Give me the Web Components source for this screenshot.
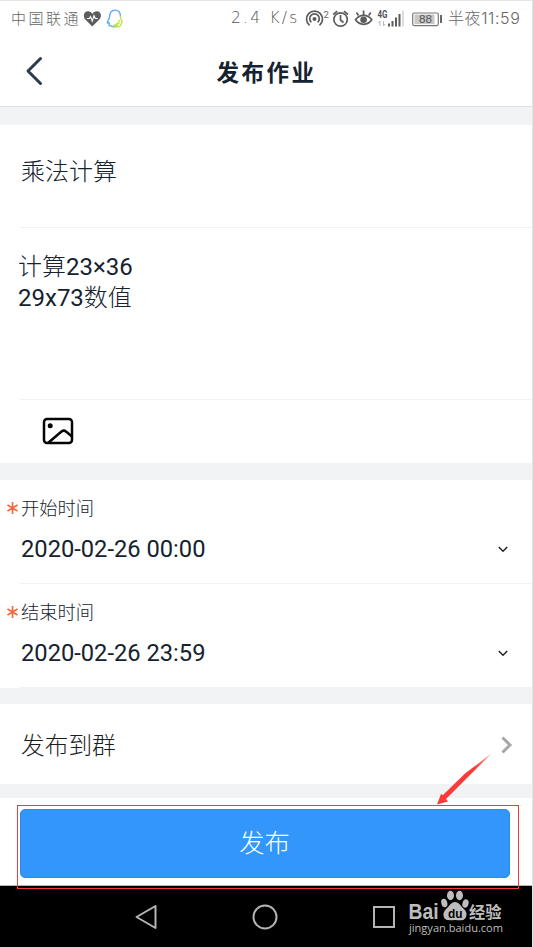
<!DOCTYPE html>
<html lang="zh-CN">
<head>
<meta charset="utf-8">
<title>发布作业</title>
<style>
    html, body { margin: 0; height: 100%; overflow: hidden; background: #fff; }
    body {
        font-family: Roboto, "Noto Sans CJK SC", sans-serif;
        color: #15222f;
    }
</style>
</head>
<body>
<homework-page></homework-page>

<script>
// small base: every element only differs in its markup
class BaseElement extends HTMLElement {
    constructor() {
        super();
        this._root = this.attachShadow({mode: 'open'});
    }

    connectedCallback() {
        this._root.innerHTML = this.render();
    }
}

class StatusBar extends BaseElement {
    render() {
        return `
            <style>
                :host {
                    display: flex;
                    justify-content: space-between;
                    height: 35px;
                    padding: 0 11px 0 11px;
                    font: 300 15px/35px Inter, "Noto Sans CJK SC", sans-serif;
                    color: #666;
                    white-space: nowrap;
                }
                div { display: flex; align-items: center; }
                svg { display: block; flex: none; }
                .carrier { width: 72px; letter-spacing: 2.5px; }
                .speed {
                    width: 74px;
                    font-family: "DejaVu Sans", sans-serif;
                    font-weight: 200;
                    font-size: 15.5px;
                    letter-spacing: 2.2px;
                    color: #555;
                }
                .clock { width: 73px; margin-left: 6px; letter-spacing: .6px; font-size: 16px; }
            </style>
            <div>
                <span class="carrier">中国联通</span>
                <svg width="19" height="20" viewBox="0 0 19 20">
                    <path d="M9.3 17.5 1.8 10C-.5 6 1.5 2.2 5 2.2c2 0 3.5 1 4.3 2.8 1-1.8 2.500-2.8 4.500-2.8 3.500 0 5.500 3.800 3 7.800z" fill="#5c5c5c"/>
                    <path d="M4 9.500h2.500l1-2 1.800 4.500 1.700-5.500 1.300 3h2.500" fill="none" stroke="#fff" stroke-width="1.100"/>
                </svg>
                <svg style="margin-left:3px" width="18" height="20" viewBox="0 0 18 20" fill="none" stroke-width="1.300">
                    <path d="M12.500 16.500c-1.500 1.700-5 1.700-6.700.300-2.100.400-2.300-.400-1.300-2l-.700-1.300c-1.500 1.500-2 .300-.700-2.300l1.400-2.700C4.500 4 6.300 1.200 10 1.200s5.400 2.800 5.500 6.500" stroke="#55aaf5"/>
                    <path d="M15.500 6.500v2.700c1.800 2.800 2 5 1 4.600-.600 2.600-2.200 4.200-3.800 3.900-2.500.400-3.900 0-4.200-1.200 3.500-.300 5.300-2.500 6-5.500M11 14.500c1.200.800 2.300.700 3.300-.500" stroke="#bfe342"/>
                </svg>
            </div>
            <div>
                <span class="speed">2.4 K/s</span>
                <svg width="137" height="22" viewBox="305 7 137 22">
                    <g fill="none" stroke="#5c5c5c" stroke-width="1.700">
                        <path d="M309.500 24.300a8 8 0 1 1 10 0M311.300 21.300a4.800 4.800 0 1 1 6.400 0"/>
                        <circle cx="340.600" cy="18.500" r="6.700"/>
                        <path d="M340.500 14v5l3 2.500M333.200 13.500l4-3.300M348 13.500l-4-3.300"/>
                        <path d="M355.500 18.800c4-5.800 12.300-5.800 16.300 0-4 6-12.300 6-16.300 0z"/>
                        <path d="M363.600 14v-4.500M358.500 14.500l-2-3M368.700 14.500l2-3"/>
                    </g>
                    <circle cx="314.500" cy="18" r="2" fill="#5c5c5c"/>
                    <circle cx="363.600" cy="18.800" r="3.300" fill="#5c5c5c"/>
                    <text x="323.500" y="16.500" font-family="Roboto" font-size="9.500" font-weight="400" fill="#666">2</text>
                    <text x="377.500" y="17" font-family="Roboto" font-size="10" font-weight="700" fill="#555" textLength="10" lengthAdjust="spacingAndGlyphs">4G</text>
                    <path d="M380 25v-5l-1.500 2M383.500 20v5l1.500-2" fill="none" stroke="#bbb"/>
                    <path d="M388 22.500h2v3h-2zM391.500 20h2v5.500h-2zM395 16.500h2v9h-2zM398.500 13h2v12.500h-2z" fill="#5c5c5c"/>
                    <path d="M402 9.500h2v16h-2z" fill="#ddd"/>
                    <rect x="412.700" y="12" width="25.600" height="12.600" rx="1.500" fill="none" stroke="#777" stroke-width="1.200"/>
                    <rect x="414.500" y="13.500" width="20" height="9.600" fill="#c8c8c8"/>
                    <path d="M440 14h2v8h-2z" fill="#666"/>
                    <text x="419" y="22.300" font-family="Liberation Sans" font-size="11.500" font-weight="400" fill="#555" textLength="13" lengthAdjust="spacingAndGlyphs">88</text>
                </svg>
                <span class="clock">半夜11:59</span>
            </div>
        `;
    }
}

class TitleBar extends BaseElement {
    render() {
        return `
            <style>
                :host {
                    display: grid;
                    grid-template-columns: 60px 1fr 60px;
                    align-items: center;
                    box-sizing: border-box;
                    height: 71px;
                    border-bottom: 1px solid #e0e1e3;
                }
                svg { margin-left: 24px; }
                h1 {
                    margin: 0 0 0 1px;
                    text-align: center;
                    font: 700 22.5px/30px "Noto Sans CJK SC", sans-serif;
                    letter-spacing: 2.5px;
                }
            </style>
            <svg width="20" height="30" viewBox="0 0 20 30" fill="none" stroke="#2e3b4a" stroke-width="3" stroke-linecap="round" stroke-linejoin="round"><path d="M16.500 2.500 4 15l12.500 12.500"/></svg>
            <h1><slot></slot></h1>
        `;
    }
}

class FormCard extends BaseElement {
    render() {
        return `
            <style>
                :host { display: block; flex: none; background: #fff; }
            </style>
            <slot></slot>
        `;
    }
}

class TextField extends BaseElement {
    render() {
        return `
            <style>
                :host {
                    display: block;
                    box-sizing: border-box;
                    font-size: 24px;
                    line-height: 31px;
                }
            </style>
            <slot></slot>
        `;
    }
}

class DateField extends BaseElement {
    render() {
        return `
            <style>
                :host {
                    display: block;
                    box-sizing: border-box;
                    height: 104px;
                    padding-top: 13px;
                }
                .label { display: flex; align-items: center; height: 28px; padding-left: 7px; font-size: 18.3px; font-weight: 300; }
                .label svg { margin: 2px 3px 0 0; }
                .value { display: flex; align-items: center; justify-content: space-between; height: 54px; margin: 1px 0 0 21px; padding-right: 24px; font-size: 23.7px; }
                hr { height: 1px; margin: 7px 0 0 20px; border: 0; background: #f1f2f3; }
            </style>
            <div class="label">
                <svg width="11" height="12" viewBox="0 0 11 12" stroke="#f4693c" stroke-width="1.700"><path d="M5.500 0v12M.500 3l10 6M.500 9l10-6"/></svg>
                <span>${this.getAttribute('label')}</span>
            </div>
            <div class="value">
                <span><slot></slot></span>
                <svg width="10" height="7" viewBox="0 0 10 7" fill="none" stroke="#222" stroke-width="1.500"><path d="m.800 1 4.200 4.200L9.200 1"/></svg>
            </div>
            <hr>
        `;
    }
}

class LinkRow extends BaseElement {
    render() {
        return `
            <style>
                :host {
                    display: flex;
                    align-items: center;
                    justify-content: space-between;
                    height: 80px;
                    padding: 0 19px 0 21px;
                    font-size: 23.7px;
                    font-weight: 300;
                    color: #1c1c22;
                }
                svg { margin-top: 2px; }
            </style>
            <span><slot></slot></span>
            <svg width="13" height="20" viewBox="0 0 13 20" fill="none" stroke="#a5a6a9" stroke-width="3"><path d="m2.500 2.500 7.500 7.500-7.500 7.500"/></svg>
        `;
    }
}

class PublishButton extends BaseElement {
    render() {
        return `
            <style>
                :host { display: block; flex: none; box-sizing: border-box; height: 88px; padding: 11px 22px 0 20px; border-bottom: 1px solid #b5b5b5; background: #fff; }
                button {
                    display: block;
                    width: 100%;
                    height: 69px;
                    padding: 0 1px 5px 0;
                    border: 1px solid #2f8ae6;
                    border-radius: 5px;
                    background: #3396fb;
                    color: #fff;
                    font: 300 25.3px "Noto Sans CJK SC", sans-serif;
                }
            </style>
            <button><slot></slot></button>
        `;
    }
}

class SystemNav extends BaseElement {
    render() {
        return `
            <style>
                :host { display: flex; flex: none; box-sizing: border-box; align-items: center; height: 61px; background: #000; }
                svg { flex: none; }
                .back { margin-left: 134px; }
                .home { margin-left: 93px; }
                .recent { margin-left: 93.5px; }
                .mark { margin-left: 11.5px; overflow: visible; }
            </style>
            <svg class="back" width="25" height="28" viewBox="0 0 25 28" fill="none" stroke="#b4b4b4" stroke-width="2" stroke-linejoin="round"><path d="M21.500 3v22L2.500 14z"/></svg>
            <svg class="home" width="26" height="26" viewBox="0 0 26 26" fill="none" stroke="#b4b4b4" stroke-width="2"><circle cx="13" cy="13" r="11.500"/></svg>
            <svg class="recent" width="24" height="24" viewBox="0 0 24 24" fill="none" stroke="#b4b4b4" stroke-width="2"><rect x="2" y="2" width="20" height="20"/></svg>
            <svg class="mark" width="100" height="52" viewBox="407 890.500 100 52" fill="#bdbdbd">
                <text x="408.500" y="918.500" font-family="Liberation Sans" font-weight="700" font-size="21.500" textLength="30" lengthAdjust="spacingAndGlyphs">Bai</text>
                <ellipse cx="444.300" cy="902.500" rx="3" ry="4.300" transform="rotate(-15 444.300 902.500)"/>
                <ellipse cx="450.500" cy="895" rx="3.500" ry="4.700"/>
                <ellipse cx="459.500" cy="895" rx="3.500" ry="4.700"/>
                <ellipse cx="465.500" cy="903" rx="3" ry="4.300" transform="rotate(18 465.500 903)"/>
                <path d="M455 901.500c4 0 5.500 4 8.500 6.500 3.300 3 3.700 6 2.300 9-1.500 3.200-4.500 3-10.800 2.500-6.500.500-9.500.500-11-2.500-1.300-3-.500-6 2.500-9 3-2.500 4.500-6.500 8.500-6.500z"/>
                <text x="448" y="917.500" font-family="Liberation Sans" font-weight="700" font-size="12.500" fill="#000" textLength="14.500" lengthAdjust="spacingAndGlyphs">du</text>
                <text x="469" y="917.500" font-family="Noto Sans CJK SC" font-weight="700" font-size="16.300">经验</text>
                <text x="409" y="931" font-family="Open Sans" font-weight="500" font-size="11.500" textLength="94" lengthAdjust="spacingAndGlyphs">jingyan.baidu.com</text>
            </svg>
        `;
    }
}

// red frame and arrow drawn over the page
class CalloutMark extends BaseElement {
    render() {
        return `
            <style>
                :host { position: absolute; left: 17px; top: 749px; width: 502px; height: 140px; pointer-events: none; }
                svg { display: block; }
            </style>
            <svg width="502" height="140" viewBox="17 750 502 140">
                <defs>
                    <linearGradient id="fade" x1="1" y1="0" x2="0" y2="1">
                        <stop offset="0" stop-color="#fb3a3a" stop-opacity=".5"/>
                        <stop offset=".3" stop-color="#fb3a3a"/>
                    </linearGradient>
                </defs>
                <rect x="17.500" y="805.500" width="501" height="83" fill="none" stroke="#f43b3b"/>
                <path d="M491.500 753.500 465 773.500l-22 21.500-2-1-4 10.500 11-3-2-2.500 22-22z" fill="url(#fade)"/>
            </svg>
        `;
    }
}

class HomeworkPage extends BaseElement {
    render() {
        return `
            <style>
                :host {
                    display: flex;
                    flex-direction: column;
                    position: relative;
                    box-sizing: border-box;
                    width: 533px;
                    height: 947px;
                    border-top: 1px solid #e5e5e5;
                    border-right: 1px solid #e5e5e5;
                    background: #f2f3f5;
                    overflow: hidden;
                }
                .top { flex: none; background: #fff; }
                form-card { margin-top: 17px; }
                form-card.first { margin-top: 18px; }
                form-card.group { margin-top: 16px; }
                .subject { height: 102px; padding: 32px 21px 0; font-weight: 300; }
                .content { height: 171px; padding: 24px 18px 0; }
                .content span { font-weight: 300; }
                hr { height: 1px; margin: 0 0 0 20px; border: 0; background: #f1f2f3; }
                .tools { height: 63px; }
                .tools svg { display: block; padding: 17px 0 0 42px; }
                publish-button { margin-top: 14px; }
            </style>
            <div class="top">
                <status-bar></status-bar>
                <title-bar>发布作业</title-bar>
            </div>
            <form-card class="first">
                <text-field class="subject">乘法计算</text-field>
                <hr>
                <text-field class="content"><span>计算</span>23×36<br>29x73<span>数值</span></text-field>
                <hr>
                <div class="tools">
                    <svg width="32" height="28" viewBox="0 0 32 28" fill="none" stroke="#050505" stroke-width="2.500" stroke-linejoin="round"><rect x="2" y="2" width="28" height="24" rx="3"/><path d="m6 26 13.500-11.500c1.500-1.200 3-1.200 4.500 0l6 5"/><circle cx="8.200" cy="8.700" r="2.500" fill="#050505" stroke="none"/></svg>
                </div>
            </form-card>
            <form-card>
                <date-field label="开始时间">2020-02-26 00:00</date-field>
                <date-field label="结束时间">2020-02-26 23:59</date-field>
            </form-card>
            <form-card class="group">
                <link-row>发布到群</link-row>
            </form-card>
            <publish-button>发布</publish-button>
            <system-nav></system-nav>
            <callout-mark></callout-mark>
        `;
    }
}

customElements.define('status-bar', StatusBar);
customElements.define('title-bar', TitleBar);
customElements.define('form-card', FormCard);
customElements.define('text-field', TextField);
customElements.define('date-field', DateField);
customElements.define('link-row', LinkRow);
customElements.define('publish-button', PublishButton);
customElements.define('system-nav', SystemNav);
customElements.define('callout-mark', CalloutMark);
customElements.define('homework-page', HomeworkPage);
</script>
</body>
</html>
